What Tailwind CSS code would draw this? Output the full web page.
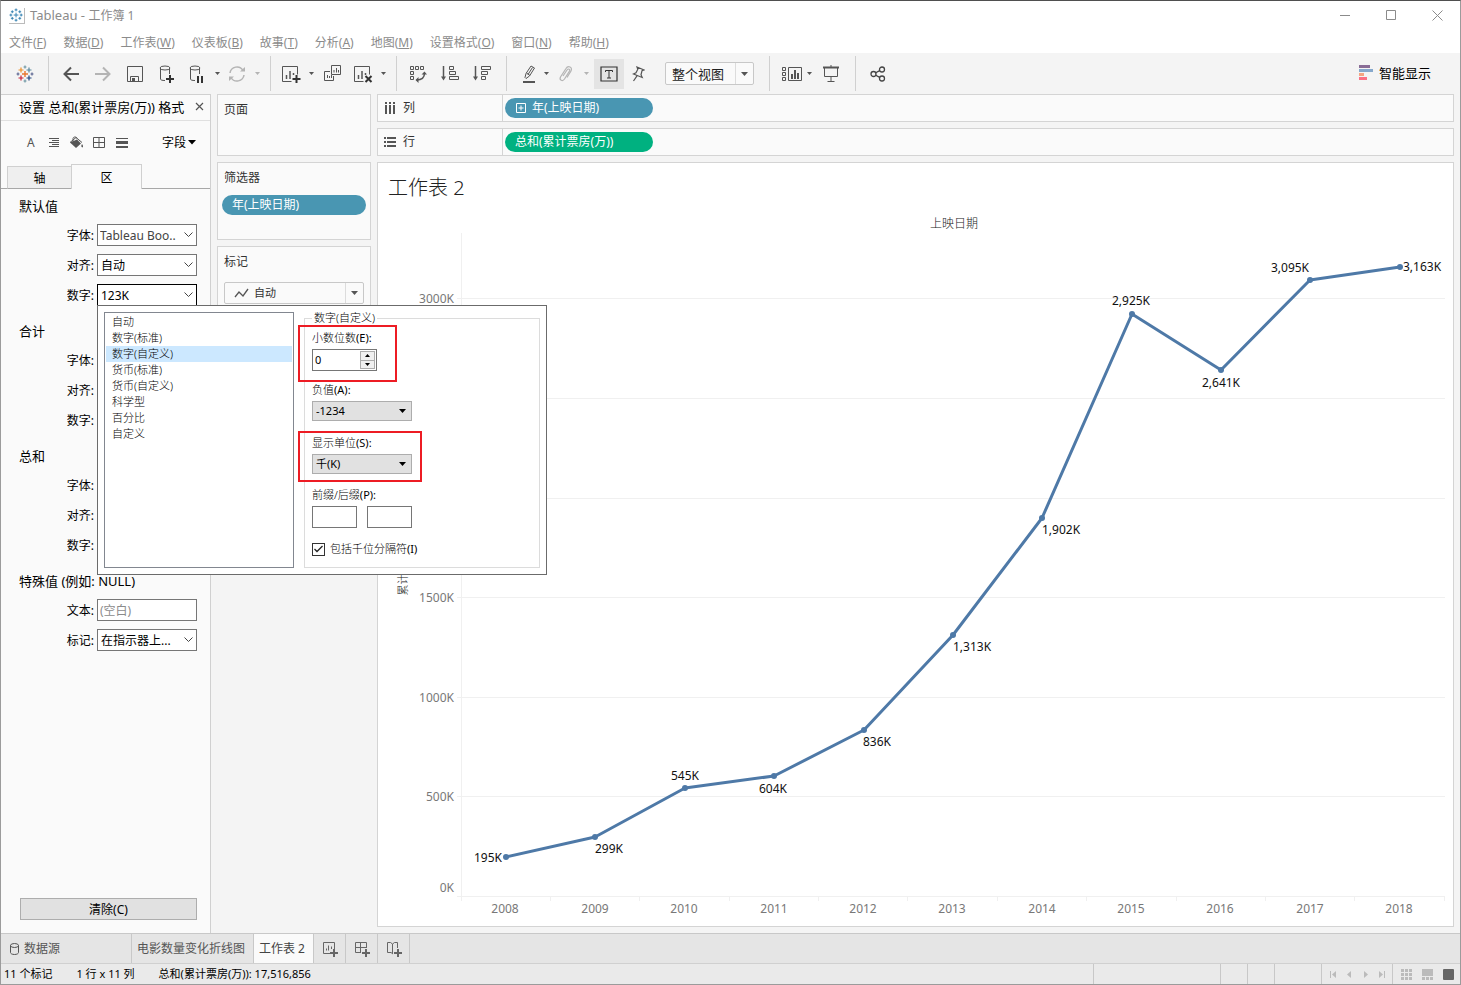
<!DOCTYPE html>
<html lang="zh-CN">
<head>
  <meta charset="UTF-8">
  <meta name="viewport" content="width=device-width, initial-scale=1.0">
  <title>Tableau - 工作簿 1</title>
  <script src="https://cdn.jsdelivr.net/npm/@tailwindcss/browser@4"></script>
</head>
<body class="font-['Noto_Sans','Noto_Sans_CJK_SC',sans-serif] text-xs text-black">

<div class="relative flex flex-col h-screen border border-[#9b9b9b] border-t-[#4f4f4f] bg-white overflow-hidden">

  <!-- Title bar -->
  <header class="flex items-center h-[29px] shrink-0 pl-2 text-[#8b8b8b]">
    <svg class="w-4 h-4 border-r border-b border-[#bbb]" viewBox="0 0 16 16" fill="none" stroke="#2f7fb0" stroke-width="1">
      <path d="M7.500 5v5M5 7.500h5M7.500 0.500v3M6 2h3M7.500 11.500v3M6 13h3M0.500 7.500h3M2 6v3M11.500 7.500h3M13 6v3M3.500 2.500v3M2 4h3M11.500 2.500v3M10 4h3M3.500 9.500v3M2 11h3M11.500 9.500v3M10 11h3"/>
    </svg>
    <h1 class="ml-[5px]"><span class="text-[13px]">Tableau - </span>工作簿 1</h1>
    <div class="ml-auto flex">
      <button aria-label="最小化" class="w-[46px] h-7 flex items-center justify-center"><svg width="11" height="11" stroke="#8b8b8b"><path d="M0 5.500h10"/></svg></button>
      <button aria-label="最大化" class="w-[46px] h-7 flex items-center justify-center"><svg width="11" height="11" fill="none" stroke="#8b8b8b"><path d="M.5.5h9v9h-9z"/></svg></button>
      <button aria-label="关闭" class="w-[46px] h-7 flex items-center justify-center"><svg width="11" height="11" stroke="#8b8b8b"><path d="M.5.5l10 10M10.500.5l-10 10"/></svg></button>
    </div>
  </header>

  <!-- Menu -->
  <nav class="flex items-center gap-[17px] h-[23px] shrink-0 pl-2 pt-0.5 text-[#8b8b8b] whitespace-nowrap">
    <a href="#">文件(<u>F</u>)</a>
    <a href="#">数据(<u>D</u>)</a>
    <a href="#">工作表(<u>W</u>)</a>
    <a href="#">仪表板(<u>B</u>)</a>
    <a href="#">故事(<u>T</u>)</a>
    <a href="#">分析(<u>A</u>)</a>
    <a href="#">地图(<u>M</u>)</a>
    <a href="#">设置格式(<u>O</u>)</a>
    <a href="#">窗口(<u>N</u>)</a>
    <a href="#">帮助(<u>H</u>)</a>
  </nav>

  <!-- Toolbar -->
  <div class="flex items-center h-[41px] shrink-0 bg-[#f4f4f4]">
    <button aria-label="开始页面" class="w-[47px] flex justify-center">
      <svg width="18" height="18" viewBox="0 0 18 18" fill="none" stroke-width="1.200">
        <path stroke="#e8762d" d="M9 6v6M6 9h6" stroke-width="1.400"/>
        <path stroke="#7199a6" d="M9 .5v3M7.500 2h3M9 14.500v3M7.500 16h3"/>
        <path stroke="#5b6591" d="M.5 9h3M2 7.500v3M14.500 9h3M16 7.500v3"/>
        <path stroke="#eb912c" d="M5 2.500v5M2.500 5h5"/>
        <path stroke="#59879b" d="M13 2.500v5M10.500 5h5"/>
        <path stroke="#c72035" d="M5 10.500v5M2.500 13h5"/>
        <path stroke="#1f447e" d="M13 10.500v5M10.500 13h5"/>
      </svg>
    </button>
    <span class="w-px h-[35px] bg-[#d0d0d0] mr-1.5"></span>
    <button aria-label="撤消" class="w-8 flex justify-center"><svg width="18" height="18" fill="none" stroke="#555" stroke-width="2"><path d="M17 9H2M9 2.500L2.500 9 9 15.500"/></svg></button>
    <button aria-label="重做" class="w-8 flex justify-center"><svg width="18" height="18" fill="none" stroke="#b4b4b4" stroke-width="2"><path d="M1 9h15M9 2.500L15.500 9 9 15.500"/></svg></button>
    <button aria-label="保存" class="w-8 flex justify-center"><svg width="18" height="18" fill="none" stroke="#555"><path d="M1.500 1.500h15v15h-15zM4.500 16v-4.500h8V16"/><path d="M6 13h3v3H6z" fill="#555" stroke="none"/></svg></button>
    <button aria-label="新建数据源" class="w-8 flex justify-center"><svg width="18" height="20" fill="none" stroke="#555"><ellipse cx="7" cy="4" rx="5" ry="2"/><path d="M2.500 4v11c0 1 1.500 1.500 4.500 1.500M11.500 4v6"/><path d="M12 11v8M8 15h8" stroke="#333" stroke-width="2"/></svg></button>
    <button aria-label="暂停自动更新" class="w-7 flex justify-center"><svg width="18" height="20" fill="none" stroke="#555"><ellipse cx="7" cy="4" rx="5" ry="2"/><path d="M2.500 4v11c0 1 1.500 1.500 4.500 1.500M11.500 4v6"/><path d="M10 12v7M14 12v7" stroke="#333" stroke-width="2"/></svg></button>
    <button aria-label="更新选项" class="w-3 flex justify-center"><svg width="5" height="3"><path d="M0 0h5L2.500 3z" fill="#555"/></svg></button>
    <button aria-label="刷新" class="w-7 flex justify-center"><svg width="18" height="18" fill="none" stroke="#b4b4b4" stroke-width="1.500"><path d="M2 8a7 7 0 0 1 13-2.500M16 10a7 7 0 0 1-13 2.500"/><path d="M12 6.500h5V2zM6 11.500H1V16z" fill="#b4b4b4" stroke="none"/></svg></button>
    <button aria-label="刷新选项" class="w-3 flex justify-center"><svg width="5" height="3"><path d="M0 0h5L2.500 3z" fill="#b4b4b4"/></svg></button>
    <span class="w-px h-[35px] bg-[#d0d0d0] ml-[7px] mr-1.5"></span>
    <button aria-label="新建工作表" class="w-7 flex justify-center"><svg width="20" height="20" fill="none" stroke="#555"><path d="M10.500 17.500h-9v-15h15v8"/><path d="M5.500 15v-4M9 15V7M12.500 11V9" stroke-width="1.500"/><path d="M15.500 11v8M11.500 15h8" stroke="#333" stroke-width="2"/></svg></button>
    <button aria-label="新建选项" class="w-3 flex justify-center"><svg width="5" height="3"><path d="M0 0h5L2.500 3z" fill="#555"/></svg></button>
    <button aria-label="复制" class="w-8 flex justify-center"><svg width="18" height="18" fill="none" stroke="#555"><path d="M7.500.5h9v9h-9zM6 6.500H.5v9h9V11M10 7.500V5M12.500 7.500V3M14.500 7.500V5M3.500 13v-3M5.500 13v-2M7.500 13v-3"/></svg></button>
    <button aria-label="清除工作表" class="w-7 flex justify-center"><svg width="20" height="20" fill="none" stroke="#555"><path d="M10.500 17.500h-9v-15h15v8"/><path d="M5.500 15v-4M9 15V7M12.500 11V9" stroke-width="1.500"/><path d="M12.500 12l6 6M18.500 12l-6 6" stroke="#333" stroke-width="2"/></svg></button>
    <button aria-label="清除选项" class="w-3 flex justify-center"><svg width="5" height="3"><path d="M0 0h5L2.500 3z" fill="#555"/></svg></button>
    <span class="w-px h-[35px] bg-[#d0d0d0] ml-[7px] mr-[5px]"></span>
    <button aria-label="交换行和列" class="w-8 flex justify-center"><svg width="18" height="18" fill="none" stroke="#555"><path d="M1.500 1.500h3v3h-3zM6.500 1.500h3v3h-3zM11.500 1.500h3v3h-3zM1.500 6.500h3v3h-3zM1.500 11.500h3v3h-3z"/><path d="M15.500 8c0 4-2.500 7-8 7" stroke-width="1.500"/><path d="M12.500 9.500l3-3 2.500 3zM9.500 12L6.500 15l3 3z" fill="#555" stroke="none"/></svg></button>
    <button aria-label="升序排序" class="w-8 flex justify-center"><svg width="20" height="18" fill="none" stroke="#555"><path d="M3.500 1v12" stroke-width="1.500"/><path d="M1 11.500h5l-2.500 4z" fill="#555" stroke="none"/><path d="M9.500 1.500h4v3h-4zM9.500 6.500h6v3h-6zM9.500 11.500h9v3h-9z"/></svg></button>
    <button aria-label="降序排序" class="w-8 flex justify-center"><svg width="20" height="18" fill="none" stroke="#555"><path d="M3.500 1v12" stroke-width="1.500"/><path d="M1 11.500h5l-2.500 4z" fill="#555" stroke="none"/><path d="M9.500 1.500h9v3h-9zM9.500 6.500h6v3h-6zM9.500 11.500h4v3h-4z"/></svg></button>
    <span class="w-px h-[35px] bg-[#d0d0d0] ml-2 mr-[11px]"></span>
    <button aria-label="突出显示" class="w-[22px] flex justify-center"><svg width="16" height="20" fill="none" stroke="#555"><path d="M4 13.500l1-4L10 2l3.500 2-5 8-3.500 2.500zM5.500 9l3.500 2.500M7 10.500l4.500-7"/><path d="M2 18h12" stroke-width="2"/></svg></button>
    <button aria-label="突出显示选项" class="w-3 flex justify-center"><svg width="5" height="3"><path d="M0 0h5L2.500 3z" fill="#555"/></svg></button>
    <button aria-label="组成员" class="w-7 flex justify-center"><svg width="16" height="18" fill="none" stroke="#b4b4b4" stroke-width="1.200"><path d="M5 11l4-6c1.500-2 3.500-.5 2.500 1L6.500 14c-2 3-5.500 1-4-2L8 3.500c2-3.500 7-1.500 5 2.500l-4 6.500"/></svg></button>
    <button aria-label="组选项" class="w-3 flex justify-center"><svg width="5" height="3"><path d="M0 0h5L2.500 3z" fill="#b4b4b4"/></svg></button>
    <button aria-label="显示标记标签" class="ml-0.5 w-[30px] h-[30px] bg-[#e4e4e4] flex items-center justify-center"><svg width="18" height="16" fill="none" stroke="#333"><path d="M1 1h16v14H1z" stroke-width="1.200"/><path d="M5.500 6V4.500h7V6M9 4.500v7.500M7 12h4"/></svg></button>
    <button aria-label="固定轴" class="w-7 flex justify-center"><svg width="14" height="18" fill="none" stroke="#555" stroke-width="1.200"><path d="M6 2l7 3-2 .8-1 4 1.200 2.700-8.700-3.500 2.500-1.200L6.800 4.200zM6 10.800L2.500 16"/></svg></button>
    <div class="relative ml-[13px] w-[89px]">
      <select aria-label="适合" class="appearance-none block w-full h-[23px] pl-1.5 border border-[#c8c8c8] rounded-xs bg-[#fafafa] text-[13px] leading-5 text-[#222]"><option>整个视图</option></select>
      <span class="absolute right-px top-px h-[21px] w-[18px] border-l border-[#dcdcdc] flex items-center justify-center pointer-events-none"><svg width="7" height="4"><path d="M0 0h7L3.500 4z" fill="#555"/></svg></span>
    </div>
    <span class="w-px h-[35px] bg-[#d0d0d0] ml-[15px] mr-[11px]"></span>
    <button aria-label="显示/隐藏卡" class="w-[22px] flex justify-center"><svg width="22" height="16" fill="none" stroke="#555"><path d="M1.500 1.500h3v3h-3zM1.500 6.500h3v3h-3zM1.500 11.500h3v3h-3zM7.500 1.500h13v13h-13z"/><path d="M11 13V8M14 13V4M17 13V7" stroke-width="2"/></svg></button>
    <button aria-label="卡选项" class="w-3 flex justify-center"><svg width="5" height="3"><path d="M0 0h5L2.500 3z" fill="#555"/></svg></button>
    <button aria-label="演示模式" class="w-8 flex justify-center"><svg width="18" height="18" fill="none" stroke="#555"><path d="M1 2.500h16" stroke-width="2"/><path d="M2.500 3v8.500h13V3M9 0v2M9 12v4.500M5.500 16.500h7"/></svg></button>
    <span class="w-px h-[35px] bg-[#d0d0d0] mx-2"></span>
    <button aria-label="共享" class="w-7 flex justify-center"><svg width="16" height="16" fill="none" stroke="#444" stroke-width="1.300"><circle cx="3.500" cy="8" r="2.500"/><circle cx="12" cy="3.500" r="2.500"/><circle cx="12" cy="12.500" r="2.500"/><path d="M5.700 6.800l4-2.200M5.700 9.200l4 2.200"/></svg></button>
    <button class="ml-auto mr-[29px] flex items-center gap-1.5 text-[13px]">
      <svg width="14" height="16"><path fill="#8a6d96" d="M0 0h11v3H0z"/><path fill="#86a8cc" d="M0 4h14v3H0z"/><path fill="#f4a582" d="M0 8h5v3H0z"/><path fill="#fb7185" d="M0 12h8v3H0z"/></svg>
      智能显示
    </button>
  </div>

  <main class="flex flex-1 min-h-0 gap-1.5 pr-1.5 bg-[#f4f4f4]">

    <!-- Format pane -->
    <aside class="flex flex-col w-[210px] shrink-0 border-t border-r border-[#d0d0d0] bg-[#fafafa]">
      <div class="flex items-center justify-between h-[26px] pl-[18px] pr-1.5 border-b border-[#e0e0e0]">
        <h2 class="text-[13px] whitespace-nowrap">设置 总和(累计票房(万)) 格式</h2>
        <button aria-label="关闭" class="-mt-0.5"><svg width="9" height="9" stroke="#555" stroke-width="1.200"><path d="M1 1l7 7M8 1L1 8"/></svg></button>
      </div>
      <div class="flex items-center h-[43px] pl-[21px]">
        <button aria-label="字体" class="w-6 leading-4 pl-[5px] text-left text-[#555]">A</button>
        <button aria-label="对齐" class="w-[22px] pl-0.5"><svg width="12" height="12" stroke="#555"><path d="M1 1.500h10M4 3.500h7M1 5.500h10M4 7.500h7M1 9.500h10"/></svg></button>
        <button aria-label="阴影" class="w-6 pl-px"><svg width="15" height="14"><path d="M1 6.500L8 3.500l4 4-5 4.500z" fill="#555"/><path d="M1 6.500L7 1.500l6 5M4 6V2.500C4 .5 8 .5 8 2.500" fill="none" stroke="#555"/><path d="M13 8c1 1.500 1.500 2.500.5 3.500-1.500-.5-1.500-1.500-.5-3.500z" fill="#555"/></svg></button>
        <button aria-label="边框" class="w-[23px] pl-px"><svg width="12" height="12" fill="none" stroke="#555"><path d="M.5.5h11v10H.5zM6 .5v10M.5 5.500h11"/></svg></button>
        <button aria-label="线" class="w-5 pl-px"><svg width="12" height="12" fill="#555"><path d="M0 1h12v1H0zM0 4h12v3H0zM0 9h12v2H0z"/></svg></button>
        <button class="ml-auto mr-3.5 flex items-center">字段<svg class="ml-0.5" width="8" height="5"><path d="M0 0h8L4 4.500z"/></svg></button>
      </div>
      <div class="flex items-end h-[25px] shrink-0">
        <span class="self-end w-1.5 border-b border-[#a8a8a8]"></span>
        <button class="w-[64px] h-[23px] pt-0.5 border border-r-0 border-[#d0d0d0] border-b-[#a8a8a8] bg-[#efefef]">轴</button>
        <button class="w-[71px] h-[25px] pt-px border border-b-0 border-[#d0d0d0]">区</button>
        <span class="flex-1 border-b border-[#a8a8a8]"></span>
      </div>

      <section>
        <h3 class="h-[35px] flex items-center pl-[18px] text-[13px]">默认值</h3>
        <div class="flex h-[30px] items-start pr-[13px]">
          <label for="defFont" class="flex-1 text-right leading-6 pr-[3px]">字体:</label>
          <div class="relative w-[100px]">
            <select id="defFont" class="appearance-none block w-full h-[22px] pl-0.5 pt-0.5 border border-[#767676] bg-white text-[#444]"><option>Tableau Boo..</option></select>
            <svg class="absolute right-1 top-2 pointer-events-none" width="9" height="6" fill="none" stroke="#444"><path d="M.5.5l4 4 4-4"/></svg>
          </div>
        </div>
        <div class="flex h-[30px] items-start pr-[13px]">
          <label for="defAlign" class="flex-1 text-right leading-6 pr-[3px]">对齐:</label>
          <div class="relative w-[100px]">
            <select id="defAlign" class="appearance-none block w-full h-[22px] pl-[3px] pt-0.5 border border-[#767676] bg-white"><option>自动</option></select>
            <svg class="absolute right-1 top-2 pointer-events-none" width="9" height="6" fill="none" stroke="#444"><path d="M.5.5l4 4 4-4"/></svg>
          </div>
        </div>
        <div class="flex h-[30px] items-start pr-[13px]">
          <label for="defNum" class="flex-1 text-right leading-6 pr-[3px]">数字:</label>
          <div class="relative w-[100px]">
            <select id="defNum" class="appearance-none block w-full h-[22px] pl-[3px] pt-0.5 border border-black bg-white"><option>123K</option></select>
            <svg class="absolute right-1 top-2 pointer-events-none" width="9" height="6" fill="none" stroke="#444"><path d="M.5.5l4 4 4-4"/></svg>
          </div>
        </div>
      </section>

      <section>
        <h3 class="h-[35px] flex items-center pl-[18px] text-[13px]">合计</h3>
        <div class="flex h-[30px] items-start pr-[13px]">
          <label for="totFont" class="flex-1 text-right leading-6 pr-[3px]">字体:</label>
          <select id="totFont" class="appearance-none w-[100px] h-[22px] border border-[#767676] bg-white"></select>
        </div>
        <div class="flex h-[30px] items-start pr-[13px]">
          <label for="totAlign" class="flex-1 text-right leading-6 pr-[3px]">对齐:</label>
          <select id="totAlign" class="appearance-none w-[100px] h-[22px] border border-[#767676] bg-white"></select>
        </div>
        <div class="flex h-[30px] items-start pr-[13px]">
          <label for="totNum" class="flex-1 text-right leading-6 pr-[3px]">数字:</label>
          <select id="totNum" class="appearance-none w-[100px] h-[22px] border border-[#767676] bg-white"></select>
        </div>
      </section>

      <section>
        <h3 class="h-[35px] flex items-center pl-[18px] text-[13px]">总和</h3>
        <div class="flex h-[30px] items-start pr-[13px]">
          <label for="sumFont" class="flex-1 text-right leading-6 pr-[3px]">字体:</label>
          <select id="sumFont" class="appearance-none w-[100px] h-[22px] border border-[#767676] bg-white"></select>
        </div>
        <div class="flex h-[30px] items-start pr-[13px]">
          <label for="sumAlign" class="flex-1 text-right leading-6 pr-[3px]">对齐:</label>
          <select id="sumAlign" class="appearance-none w-[100px] h-[22px] border border-[#767676] bg-white"></select>
        </div>
        <div class="flex h-[30px] items-start pr-[13px]">
          <label for="sumNum" class="flex-1 text-right leading-6 pr-[3px]">数字:</label>
          <select id="sumNum" class="appearance-none w-[100px] h-[22px] border border-[#767676] bg-white"></select>
        </div>
      </section>

      <section>
        <h3 class="h-[35px] flex items-center pl-[18px] text-[13px]">特殊值 (例如: NULL)</h3>
        <div class="flex h-[30px] items-start pr-[13px]">
          <label for="nullText" class="flex-1 text-right leading-6 pr-[3px]">文本:</label>
          <input id="nullText" type="text" placeholder="(空白)" class="w-[100px] h-[22px] pl-0.5 border border-[#767676] bg-white placeholder:text-[#8b8b8b]">
        </div>
        <div class="flex h-[30px] items-start pr-[13px]">
          <label for="nullMark" class="flex-1 text-right leading-6 pr-[3px]">标记:</label>
          <div class="relative w-[100px]">
            <select id="nullMark" class="appearance-none block w-full h-[22px] pl-[3px] pt-0.5 border border-[#767676] bg-white"><option>在指示器上...</option></select>
            <svg class="absolute right-1 top-2 pointer-events-none" width="9" height="6" fill="none" stroke="#444"><path d="M.5.5l4 4 4-4"/></svg>
          </div>
        </div>
      </section>

      <button class="mt-auto mb-[13px] ml-[19px] mr-[13px] h-[22px] pt-0.5 border border-[#adadad] bg-[#e1e1e1]">清除(C)</button>
    </aside>

    <!-- Cards -->
    <div class="flex flex-col gap-1.5 w-[154px] shrink-0 text-[#333]">
      <section class="h-[62px] border border-[#d4d4d4] bg-[#fafafa] px-1.5 pt-[7px]">
        <h3 class="leading-4">页面</h3>
      </section>
      <section class="h-[78px] border border-[#d4d4d4] bg-[#fafafa] px-1 pt-[7px]">
        <h3 class="leading-4 pl-0.5">筛选器</h3>
        <button class="mt-[9px] w-full h-5 rounded-full bg-[#4996b2] pl-2.5 text-left text-white leading-5">年(上映日期)</button>
      </section>
      <section class="h-[300px] border border-[#d4d4d4] bg-[#fafafa] px-1.5 pt-[7px]">
        <h3 class="leading-4">标记</h3>
        <div class="relative mt-3">
          <select aria-label="标记类型" class="appearance-none block w-full h-[22px] pl-[29px] border border-[#c8c8c8] rounded-xs bg-[#fafafa] text-[11px]"><option>自动</option></select>
          <svg class="absolute left-2.5 top-1.5 pointer-events-none" width="15" height="10" fill="none" stroke="#555" stroke-width="1.300"><path d="M1 9l4-5 4 4 5-7"/></svg>
          <span class="absolute right-px top-px h-5 w-[18px] border-l border-[#dcdcdc] flex items-center justify-center pointer-events-none"><svg width="7" height="4"><path d="M0 0h7L3.500 4z" fill="#555"/></svg></span>
        </div>
      </section>
    </div>

    <!-- Shelves and view -->
    <div class="flex flex-col gap-1.5 flex-1 min-w-0 pb-1.5">
      <div class="flex items-center h-7 shrink-0 border border-[#d4d4d4] bg-[#fafafa]">
        <div class="flex items-center gap-[7px] w-[125px] h-full pl-1.5 border-r border-[#d4d4d4] text-[#333]">
          <svg width="12" height="12" fill="#555"><path d="M1 0h2v2H1zM1 3h2v9H1zM5 0h2v2H5zM5 3h2v9H5zM9 0h2v2H9zM9 3h2v9H9z"/></svg>列
        </div>
        <button class="ml-0.5 flex items-center gap-1.5 w-[148px] h-5 rounded-full bg-[#4996b2] pl-[11px] text-white">
          <svg width="10" height="10" fill="none" stroke="#fff"><path d="M.5.5h9v9h-9zM5 2.500v5M2.500 5h5"/></svg>年(上映日期)
        </button>
      </div>
      <div class="flex items-center h-7 shrink-0 border border-[#d4d4d4] bg-[#fafafa]">
        <div class="flex items-center gap-[7px] w-[125px] h-full pl-1.5 border-r border-[#d4d4d4] text-[#333]">
          <svg width="12" height="12" fill="#555"><path d="M0 1h2v2H0zM3 1h9v2H3zM0 5h2v2H0zM3 5h9v2H3zM0 9h2v2H0zM3 9h9v2H3z"/></svg>行
        </div>
        <button class="ml-0.5 w-[148px] h-5 rounded-full bg-[#00b180] pl-2.5 text-left text-white">总和(累计票房(万))</button>
      </div>

      <section class="flex flex-col flex-1 min-h-0 border border-[#d4d4d4] bg-white">
        <h2 class="h-[50px] shrink-0 flex items-center pl-2.5 text-xl font-light text-[#222]">工作表 2</h2>
        <svg class="w-full flex-1 min-h-0" viewBox="0 0 1075 713" font-size="12">
          <text x="576" y="15" text-anchor="middle" font-weight="300" fill="#222">上映日期</text>
          <text transform="translate(29 352) rotate(-90)" text-anchor="middle" font-size="11" font-weight="300" fill="#222">累计票房(万)</text>
          <!-- grid -->
          <path d="M79 85.500h988M79 185.500h988M79 285.500h988M79 384.500h988M79 484.500h988M79 583.500h988M79 683.500h988" stroke="#f0f0f0"/>
          <path d="M83.500 20v668M172.500 684v4M261.500 684v4M351.500 684v4M440.500 684v4M529.500 684v4M619.500 684v4M708.500 684v4M798.500 684v4M887.500 684v4M976.500 684v4M1066.500 684v4" stroke="#f0f0f0"/>
          <g text-anchor="end" fill="#787878">
            <text x="76" y="90">3000K</text>
            <text x="76" y="190">2500K</text>
            <text x="76" y="290">2000K</text>
            <text x="76" y="389">1500K</text>
            <text x="76" y="489">1000K</text>
            <text x="76" y="588">500K</text>
            <text x="76" y="679">0K</text>
          </g>
          <g text-anchor="middle" fill="#787878">
            <text x="127" y="700">2008</text>
            <text x="217" y="700">2009</text>
            <text x="306" y="700">2010</text>
            <text x="396" y="700">2011</text>
            <text x="485" y="700">2012</text>
            <text x="574" y="700">2013</text>
            <text x="664" y="700">2014</text>
            <text x="753" y="700">2015</text>
            <text x="842" y="700">2016</text>
            <text x="932" y="700">2017</text>
            <text x="1021" y="700">2018</text>
          </g>
          <!-- line -->
          <polyline points="128,644 217,624 307,575 396,563 486,517 575,422 664,305 754,101 843,157 932,67 1022,54" fill="none" stroke="#4e79a7" stroke-width="3" stroke-linejoin="round"/>
          <g fill="#4e79a7">
            <circle cx="128" cy="644" r="3"/><circle cx="217" cy="624" r="3"/><circle cx="307" cy="575" r="3"/><circle cx="396" cy="563" r="3"/>
            <circle cx="486" cy="517" r="3"/><circle cx="575" cy="422" r="3"/><circle cx="664" cy="305" r="3"/><circle cx="754" cy="101" r="3"/>
            <circle cx="843" cy="157" r="3"/><circle cx="932" cy="67" r="3"/><circle cx="1022" cy="54" r="3"/>
          </g>
          <g fill="#111">
            <text x="124" y="649" text-anchor="end">195K</text>
            <text x="217" y="640">299K</text>
            <text x="307" y="567" text-anchor="middle">545K</text>
            <text x="395" y="580" text-anchor="middle">604K</text>
            <text x="485" y="533">836K</text>
            <text x="575" y="438">1,313K</text>
            <text x="664" y="321">1,902K</text>
            <text x="753" y="92" text-anchor="middle">2,925K</text>
            <text x="843" y="174" text-anchor="middle">2,641K</text>
            <text x="912" y="59" text-anchor="middle">3,095K</text>
            <text x="1025" y="58">3,163K</text>
          </g>
        </svg>
      </section>
    </div>
  </main>

  <!-- Sheet tabs -->
  <div class="flex h-[30px] shrink-0 border-t border-[#c8c8c8] bg-[#e5e5e5] text-[#555] whitespace-nowrap">
    <button class="flex items-center gap-[5px] w-[131px] pl-[9px] border-r border-[#c8c8c8]">
      <svg width="9" height="12" fill="none" stroke="#555"><ellipse cx="4.500" cy="2.500" rx="4" ry="2"/><path d="M.5 2.500v7c0 1 1.500 2 4 2s4-1 4-2v-7"/></svg>数据源
    </button>
    <button class="w-[122px] pl-[5px] text-left border-r border-[#c8c8c8]">电影数量变化折线图</button>
    <button class="w-[60px] pl-[5px] text-left border-r border-[#c8c8c8] bg-[#fafafa] text-[#444]">工作表 2</button>
    <button aria-label="新建工作表" class="w-8 flex items-center justify-center border-r border-[#c8c8c8]"><svg width="16" height="16" fill="none" stroke="#666"><path d="M8 12.500H1.500v-11h11V8M4.500 9.500v-2M6.500 9.500v-5M9.500 8V5.500"/><path d="M12 8v8M8 12h8" stroke-width="2"/></svg></button>
    <button aria-label="新建仪表板" class="w-8 flex items-center justify-center border-r border-[#c8c8c8]"><svg width="16" height="16" fill="none" stroke="#666"><path d="M7 11.500H1.500v-10h11V7M6.500 1.500v10M1.500 6.500h11"/><path d="M12 8v8M8 12h8" stroke-width="2"/></svg></button>
    <button aria-label="新建故事" class="w-8 flex items-center justify-center border-r border-[#c8c8c8]"><svg width="16" height="16" fill="none" stroke="#666"><path d="M7 13l-2-1.500H1.500v-10h3l2 1.500 2-1.500h3V7M6.500 3v9.500"/><path d="M12 8v8M8 12h8" stroke-width="2"/></svg></button>
  </div>

  <!-- Status bar -->
  <footer class="flex items-center h-[21px] shrink-0 border-t border-[#d0d0d0] bg-[#eaeaea] text-[11px] whitespace-nowrap">
    <span class="pl-[3px]">11 个标记</span>
    <span class="ml-6">1 行 x 11 列</span>
    <span class="ml-6">总和(累计票房(万)): 17,516,856</span>
    <div class="ml-auto flex h-full">
      <span class="w-[127px] border-l border-[#c8c8c8]"></span>
      <span class="w-[27px] border-l border-[#c8c8c8]"></span>
      <span class="w-[27px] border-l border-[#c8c8c8]"></span>
      <span class="w-[47px] border-l border-[#c8c8c8]"></span>
      <div class="flex items-center w-[71px] pl-[3px] border-l border-[#c8c8c8]">
        <button aria-label="第一个" class="w-4 flex justify-center"><svg width="7" height="7" fill="#bbb"><path d="M0 0h1v7H0zM6 0v7L2 3.500z"/></svg></button>
        <button aria-label="上一个" class="w-4 flex justify-center"><svg width="5" height="7" fill="#bbb"><path d="M4 0v7L0 3.500z"/></svg></button>
        <button aria-label="下一个" class="w-4 flex justify-center"><svg width="5" height="7" fill="#bbb"><path d="M1 0v7l4-3.500z"/></svg></button>
        <button aria-label="最后一个" class="w-4 flex justify-center"><svg width="7" height="7" fill="#bbb"><path d="M6 0h1v7H6zM1 0v7l4-3.500z"/></svg></button>
      </div>
      <div class="flex items-center gap-2.5 w-[68px] pl-2 border-l border-[#c8c8c8]">
        <button aria-label="工作表排序程序"><svg width="11" height="11" fill="#bbb"><path d="M0 0h3v3H0zM4 0h3v3H4zM8 0h3v3H8zM0 4h3v3H0zM4 4h3v3H4zM8 4h3v3H8zM0 8h3v3H0zM4 8h3v3H4zM8 8h3v3H8z"/></svg></button>
        <button aria-label="幻灯片"><svg width="11" height="11" fill="#bbb"><path d="M0 0h11v7H0zM0 8h3v3H0zM4 8h3v3H4zM8 8h3v3H8z"/></svg></button>
        <button aria-label="标签"><svg width="11" height="11"><rect width="11" height="11" rx="1" fill="#666"/></svg></button>
      </div>
    </div>
  </footer>

  <!-- Number format popup -->
  <div class="absolute left-24 top-[304px] flex gap-2.5 w-[450px] h-[270px] pt-1 pb-1.5 px-1.5 border border-[#6b6b6b] bg-white text-[11px] leading-4">
    <ul role="listbox" aria-label="数字格式" class="mt-0.5 w-[190px] border border-[#828790] p-px font-light">
      <li role="option" class="pl-1.5">自动</li>
      <li role="option" class="pl-1.5">数字(标准)</li>
      <li role="option" aria-selected="true" class="pl-1.5 bg-[#cce8ff]">数字(自定义)</li>
      <li role="option" class="pl-1.5">货币(标准)</li>
      <li role="option" class="pl-1.5">货币(自定义)</li>
      <li role="option" class="pl-1.5">科学型</li>
      <li role="option" class="pl-1.5">百分比</li>
      <li role="option" class="pl-1.5">自定义</li>
    </ul>
    <fieldset class="flex-1 border border-[#dcdcdc] pl-[7px]">
      <legend class="px-0.5 font-light">数字(自定义)</legend>
      <label for="decimals" class="block mt-1"><span class="font-light">小数位数</span>(E):</label>
      <div class="mt-[3px] flex w-[65px] h-[22px] border border-[#767676] p-px">
        <input id="decimals" type="text" value="0" class="flex-1 min-w-0 pl-px outline-none">
        <div class="flex flex-col w-[15px]">
          <button aria-label="增加" class="flex-1 flex items-center justify-center border border-[#adadad] bg-[#f0f0f0]"><svg width="5" height="3"><path d="M0 3h5L2.500 0z"/></svg></button>
          <button aria-label="减少" class="flex-1 flex items-center justify-center border border-t-0 border-[#adadad] bg-[#f0f0f0]"><svg width="5" height="3"><path d="M0 0h5L2.500 3z"/></svg></button>
        </div>
      </div>
      <label for="negative" class="block mt-[11px]"><span class="font-light">负值</span>(A):</label>
      <div class="relative mt-[3px] w-[100px]">
        <select id="negative" class="appearance-none block w-full h-5 pl-[3px] border border-[#adadad] bg-[#e1e1e1]"><option>-1234</option></select>
        <svg class="absolute right-1.5 top-2 pointer-events-none" width="7" height="4"><path d="M0 0h7L3.500 4z"/></svg>
      </div>
      <label for="unit" class="block mt-3.5"><span class="font-light">显示单位</span>(S):</label>
      <div class="relative mt-[3px] w-[100px]">
        <select id="unit" class="appearance-none block w-full h-5 pl-[3px] border border-[#adadad] bg-[#e1e1e1]"><option>千(K)</option></select>
        <svg class="absolute right-1.5 top-2 pointer-events-none" width="7" height="4"><path d="M0 0h7L3.500 4z"/></svg>
      </div>
      <label for="prefix" class="block mt-[13px]"><span class="font-light">前缀/后缀</span>(P):</label>
      <div class="mt-[3px] flex gap-2.5">
        <input id="prefix" type="text" class="w-[45px] h-[22px] border border-[#767676]">
        <input aria-label="后缀" type="text" class="w-[45px] h-[22px] border border-[#767676]">
      </div>
      <label class="relative mt-[13px] flex items-center">
        <input type="checkbox" checked class="appearance-none w-[13px] h-[13px] mr-[5px] border border-[#333] bg-white">
        <svg class="absolute left-0.5 top-1 pointer-events-none" width="9" height="8" fill="none" stroke="#222" stroke-width="1.300"><path d="M.5 4l2.500 2.500L8.500 1"/></svg>
        <span class="font-light">包括千位分隔符</span>(I)
      </label>
    </fieldset>
    <div class="absolute left-[200px] top-[19px] w-[99px] h-[57px] border-2 border-[#ed1c24] pointer-events-none"></div>
    <div class="absolute left-[200px] top-[125px] w-[124px] h-[51px] border-2 border-[#ed1c24] pointer-events-none"></div>
  </div>
</div>

</body>
</html>
